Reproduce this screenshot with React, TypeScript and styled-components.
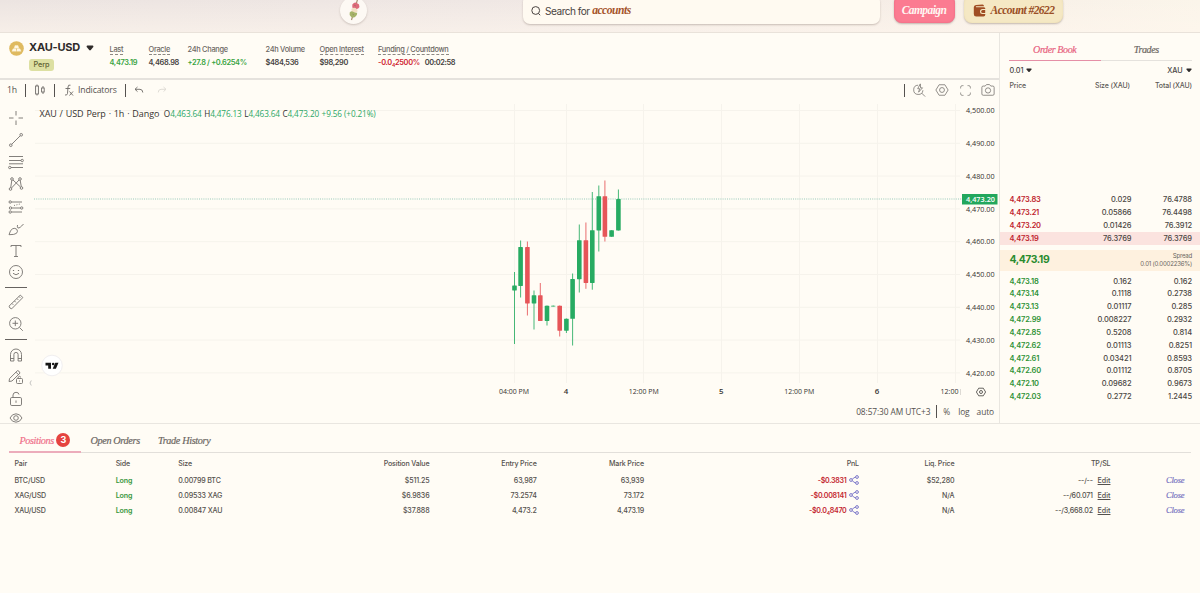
import React from 'react';
import styled, { createGlobalStyle } from 'styled-components';

const SANS = "Inter, 'Liberation Sans', sans-serif";
const SERIF = "'Liberation Serif', serif";
const CHART = "'Open Sans', 'Noto Sans', sans-serif";

const Global = createGlobalStyle`
  * { box-sizing: border-box; }
  body { margin: 0; background: #fffcf5; font-family: ${SANS}; color: #4b4744; }
`;

const Page = styled.div`
  width: 1200px;
  height: 593px;
  overflow: hidden;
  display: flex;
  flex-direction: column;
  background: #fffcf5;
`;

/* ---------- header ---------- */
const Header = styled.header`
  height: 33px;
  flex: none;
  display: flex;
  align-items: flex-start;
  background: linear-gradient(180deg, rgba(255, 250, 240, 0) 0%, rgba(255, 247, 238, 0.55) 100%),
    linear-gradient(90deg, #ece4e1 0%, #efe7e4 40%, #f5ece6 70%, #fbf5ea 100%);
  border-bottom: 1px solid #e9e2da;
`;

const LogoDisc = styled.div`
  width: 27px;
  height: 27px;
  margin: -3.5px 0 0 340px;
  border-radius: 50%;
  background: #fdf9f4;
  box-shadow: 0 1px 2px rgba(90, 70, 60, 0.25);
  display: flex;
  justify-content: center;
`;

const Search = styled.div`
  width: 357px;
  height: 29px;
  margin: -5px 0 0 155.5px;
  padding: 2px 0 0 8.5px;
  border-radius: 7px;
  background: #fffaf1;
  box-shadow: 0 1px 2px rgba(90, 70, 60, 0.3);
  display: flex;
  align-items: center;
  font-size: 10.1px;
  letter-spacing: -0.5px;
  color: #4a4441;
  svg { margin-right: 4px; }
`;

const Accent = styled.em`
  margin-left: 2.5px;
  font: italic 700 11.6px ${SERIF};
  letter-spacing: -0.5px;
  color: #a5532a;
`;

const HeaderButton = styled.div<{ $w: number; $gap: number; $bg: string; $fg: string; $edge: string }>`
  width: ${p => p.$w}px;
  height: 28px;
  margin: -5px 0 0 ${p => p.$gap}px;
  padding-top: 2px;
  border-radius: 8px;
  background: ${p => p.$bg};
  color: ${p => p.$fg};
  box-shadow: 0 1px 2px rgba(90, 70, 60, 0.35), inset 0 0 2px ${p => p.$edge};
  display: flex;
  align-items: center;
  justify-content: center;
  gap: 5px;
  font: italic 700 11.5px ${SERIF};
  letter-spacing: -0.57px;
  white-space: nowrap;
`;

/* ---------- trading area ---------- */
const Trading = styled.div`
  height: 391px;
  flex: none;
  display: flex;
  border-bottom: 1px solid #e9e6e0;
`;

const Left = styled.div`
  width: 999px;
  display: flex;
  flex-direction: column;
`;

const Market = styled.section`
  height: 47px;
  flex: none;
  display: flex;
  border-bottom: 2px solid #e5e2dd;
`;

const PairCol = styled.div`
  width: 100px;
  padding: 8px 0 0 9px;
  display: flex;
  align-items: flex-start;
`;

const PairInfo = styled.div`
  margin-left: 5px;
`;

const PairName = styled.div`
  height: 13px;
  display: flex;
  align-items: center;
  gap: 6px;
  font-size: 11px;
  font-weight: 700;
  line-height: 13px;
  letter-spacing: -0.2px;
  white-space: nowrap;
  color: #2f2b2a;
`;

const Tag = styled.div`
  width: 25px;
  height: 12px;
  margin-top: 4.5px;
  border-radius: 3px;
  background: #dde0a2;
  color: #5d6130;
  font-size: 7.3px;
  font-weight: 500;
  line-height: 12px;
  letter-spacing: -0.1px;
  text-align: center;
`;

const Stat = styled.div<{ $w: number }>`
  width: ${p => p.$w}px;
  padding: 12px 0 0 9.5px;
  white-space: nowrap;
  font-size: 7.4px;
  line-height: 9px;
`;

const StatLabel = styled.span<{ $dashed?: boolean }>`
  display: inline-block;
  height: 9.5px;
  font-weight: 500;
  color: #6c6763;
  letter-spacing: -0.28px;
  border-bottom: ${p => (p.$dashed ? '1px dashed #8d8883' : '1px solid transparent')};
`;

const StatValue = styled.div<{ $c?: string }>`
  margin-top: 3px;
  font-weight: 600;
  letter-spacing: -0.31px;
  color: ${p => p.$c ?? '#45413e'};
  sub { font-size: 5px; line-height: 0; vertical-align: -1.5px; }
  span { margin-left: 5px; color: #45413e; font-weight: 600; letter-spacing: -0.38px; }
`;

/* ---------- chart ---------- */
const Toolbar = styled.div`
  height: 20px;
  flex: none;
  display: flex;
  align-items: center;
  padding-left: 7px;
  font: 8.7px ${CHART};
  letter-spacing: -0.15px;
  color: #55524f;
`;

const Rule = styled.i<{ $l: number; $r: number }>`
  width: 1px;
  height: 13px;
  margin: 0 ${p => p.$r}px 0 ${p => p.$l}px;
  background: #55524f;
`;

const Spacer = styled.div<{ $w?: number; $h?: number }>`
  flex: ${p => (p.$w || p.$h ? 'none' : 1)};
  width: ${p => p.$w ?? 0}px;
  height: ${p => p.$h ?? 0}px;
`;

const ChartRow = styled.div`
  height: 323px;
  display: flex;
`;

const Tools = styled.div`
  width: 34px;
  padding: 10px 0 0 5px;
  overflow: hidden;
  display: flex;
  flex-direction: column;
`;

const ToolSlot = styled.div<{ $h?: number }>`
  width: 22px;
  height: ${p => p.$h ?? 22}px;
  flex: none;
  display: flex;
  justify-content: center;
  align-items: flex-start;
`;

const ToolRule = styled.div`
  width: 22px;
  height: 1px;
  flex: none;
  background: #66625f;
`;

const ChartCol = styled.div`
  width: 965px;
  position: relative;
`;

const Legend = styled.div`
  position: absolute;
  left: 5.5px;
  top: 8px;
  display: flex;
  align-items: baseline;
  white-space: nowrap;
  font: 8.2px/12px ${CHART};
  letter-spacing: -0.1px;
  color: #35322f;
`;

const LegendTitle = styled.span`
  margin-right: 4.5px;
  font-size: 9px;
  word-spacing: 0.6px;
  letter-spacing: -0.07px;
`;

const Ohlc = styled.span`
  margin-right: 2.5px;
  b { font-weight: 500; color: #2ba765; }
`;

const ChartFooter = styled.div`
  height: 21px;
  padding-right: 5px;
  display: flex;
  align-items: center;
  justify-content: flex-end;
  font: 8.4px ${CHART};
  letter-spacing: -0.1px;
  color: #55524f;
`;

/* ---------- order book ---------- */
const Book = styled.aside`
  width: 201px;
  border-left: 1px solid #e9e6e0;
  display: flex;
  flex-direction: column;
`;

const BookTabs = styled.div`
  height: 28px;
  flex: none;
  margin: 0 8px 0 9px;
  display: flex;
  border-bottom: 1px solid #e5e2dd;
`;

const BookTab = styled.div<{ $on?: boolean }>`
  flex: 1;
  height: 28px;
  padding-top: 5.5px;
  text-align: center;
  font: italic 400 10px/22px ${SERIF};
  letter-spacing: -0.38px;
  color: ${p => (p.$on ? '#e8627f' : '#6c6763')};
  -webkit-text-stroke: 0.2px currentColor;
  border-bottom: ${p => (p.$on ? '1.5px solid #e58fa6' : '0')};
`;

const BookSelects = styled.div`
  height: 18px;
  flex: none;
  padding: 0 8.5px 0 9.5px;
  display: flex;
  align-items: center;
  justify-content: space-between;
  font-size: 7.3px;
  font-weight: 500;
  letter-spacing: -0.12px;
  svg { margin-left: 3px; vertical-align: 0; }
`;

const BookLine = styled.div<{ $bg?: string }>`
  height: 12.83px;
  flex: none;
  padding: 0 8px 0 9.5px;
  display: grid;
  grid-template-columns: 60px 62px 60.5px;
  align-items: center;
  background: ${p => p.$bg ?? 'transparent'};
  font-size: 7.5px;
  font-weight: 500;
  letter-spacing: -0.08px;
  span { text-align: right; }
`;

const BookHead = styled(BookLine)`
  grid-template-columns: 60px 60.5px 62px;
  font-size: 7px;
  letter-spacing: -0.12px;
  color: #5d5955;
`;

const Price = styled.b<{ $c: string }>`
  font-size: 7.5px;
  font-weight: 600;
  letter-spacing: -0.2px;
  color: ${p => p.$c};
`;

const SpreadRow = styled.div`
  height: 21.5px;
  flex: none;
  margin: 5px 0 3.5px;
  padding: 0 8px 0 9.5px;
  display: flex;
  align-items: center;
  justify-content: space-between;
  background: #fef1df;
  font-size: 6.1px;
  line-height: 8.5px;
  letter-spacing: -0.23px;
  text-align: right;
  color: #6c6763;
  b { font-size: 10.4px; color: #2a8c2f; letter-spacing: -0.45px; }
`;

/* ---------- positions ---------- */
const Bottom = styled.section`
  flex: 1;
  padding: 0 9px;
`;

const Tabs = styled.div`
  height: 29px;
  display: flex;
  border-bottom: 1px solid #e2dfda;
`;

const Tab = styled.div<{ $w: number; $on?: boolean }>`
  width: ${p => p.$w}px;
  height: 29px;
  padding-left: ${p => (p.$on ? 10.5 : 9.5)}px;
  padding-top: ${p => (p.$on ? 5 : 3)}px;
  display: flex;
  align-items: center;
  white-space: nowrap;
  font: italic 400 10.2px ${SERIF};
  letter-spacing: ${p => (p.$on ? -0.4 : -0.35)}px;
  -webkit-text-stroke: 0.2px currentColor;
  color: ${p => (p.$on ? '#f0708a' : '#6c6763')};
  border-bottom: ${p => (p.$on ? '2px solid #ecacbb' : '0')};
`;

const Badge = styled.span`
  width: 14px;
  height: 14px;
  margin-left: 2.5px;
  border-radius: 50%;
  background: #e5433f;
  color: #fff;
  font: 700 9px/14px ${SANS};
  letter-spacing: 0;
  -webkit-text-stroke: 0;
  text-align: center;
`;

const TableRow = styled.div<{ $h: number }>`
  height: ${p => p.$h}px;
  padding-left: 5.5px;
  display: grid;
  grid-template-columns: 101.2px 62.6px 251.2px 107.2px 107.3px 215px 95.5px 156px 74px;
  align-items: center;
  font-size: 7.1px;
  font-weight: 500;
  letter-spacing: -0.15px;
  color: #55514d;
`;

const SizeCell = styled.div`
  display: flex;
  justify-content: space-between;
`;

const Cell = styled.div<{ $c?: string; $bold?: boolean }>`
  text-align: right;
  white-space: nowrap;
  color: ${p => p.$c ?? 'inherit'};
  font-weight: ${p => (p.$bold ? 600 : 500)};
  letter-spacing: ${p => (p.$bold ? -0.3 : -0.17)}px;
  sub { font-size: 5px; line-height: 0; vertical-align: -1.5px; }
  u { margin-left: 3px; letter-spacing: 0; }
  svg { vertical-align: -2.5px; margin: -2px 0 0 2.5px; }
`;

const LeftCell = styled.div<{ $c?: string }>`
  white-space: nowrap;
  color: ${p => p.$c ?? 'inherit'};
  font-weight: ${p => (p.$c ? 600 : 500)};
`;

const CloseLink = styled(Cell)`
  padding-bottom: 1px;
  font: italic 8.6px/10px ${SERIF};
  letter-spacing: -0.2px;
  color: #7470c0;
  -webkit-text-stroke: 0.15px currentColor;
`;

/* ---------- drawings ---------- */
const Caret = ({ w = 8 }: { w?: number }) => (
  <svg width={w} height={w * 0.75} viewBox="0 0 8 6">
    <path d="M1.3.6h5.4q1.1.3.6 1.4L4.8 5Q4 5.9 3.2 5L.7 2Q.2.9 1.3.6z" fill="#2f2b2a" />
  </svg>
);

const Dango = () => (
  <svg width="16" height="27" viewBox="0 0 16 27">
    <path d="M11.500 2.500 5.500 23" stroke="#a99072" strokeWidth="1.200" />
    <path d="M6.300 7.500q2-2.300 3.700-1.800t3 1.800q1 2.300-.5 3.800l-3.300 1.500q-2.200-.5-2.900-2.500z" fill="#dd6a79" />
    <path d="M5.300 12q2-2 4.300-1t2 3.500l-4 2q-2.300-1-2.300-4.500z" fill="#f3dfc4" />
    <path d="M3.700 15.500q1.800-2 3.500-.7t4 1q.3 3-2.200 4.200t-4-.3q-2-2-1.300-4.200z" fill="#a5b368" />
    <path d="M8 8l2 1M6.500 17l1.500 1" stroke="#8a6a58" strokeWidth=".5" />
  </svg>
);

const SearchIcon = () => (
  <svg width="10" height="10" viewBox="0 0 10 10" fill="none" stroke="#4a4441" strokeWidth="1">
    <circle cx="4.700" cy="4.500" r="3.900" />
    <path d="M7.300 7.400 9.200 9.200" />
  </svg>
);

const Wallet = () => (
  <svg width="13" height="13" viewBox="0 0 13 13">
    <path d="M3 1 9.500.5q1.500 0 1.500 1.700H3.200q-.8.5 0 1H11q1.300.2 1.300 1.600V5H9.500a2.500 2.500 0 0 0 0 5h2.800v.5q0 2-1.800 2H3.200Q.8 12.500.8 10V3.200Q.8 1.200 3 1z" fill="#a04e24" />
    <path d="M9.700 6h2.500v3H9.700a1.500 1.500 0 0 1 0-3z" fill="#a04e24" />
  </svg>
);

const Gold = () => (
  <svg width="15" height="15" viewBox="0 0 15 15">
    <circle cx="7.500" cy="7.500" r="7.300" fill="#dfba60" />
    <path d="M6 4.500h3l.9 2.800H5.100zM4 7.800h2.900l.3 2.500H2.900zM8.100 7.800H11l1.100 2.500H7.800z" fill="#fff8e4" stroke="#fff8e4" strokeWidth=".3" strokeLinejoin="round" />
  </svg>
);

const Share = () => (
  <svg width="10" height="10" viewBox="0 0 10 10" fill="none" stroke="#6f6bc4" strokeWidth=".9">
    <circle cx="2" cy="5" r="1.400" />
    <circle cx="8" cy="2" r="1.400" />
    <circle cx="8" cy="8" r="1.400" />
    <path d="M3.300 4.400Q4.300 2.500 6.600 2.200M3.300 5.600q1 1.800 3.300 2.200" />
  </svg>
);

const Icon = ({ children, size = 16 }: { children: React.ReactNode; size?: number }) => (
  <svg width={size} height={size} viewBox="0 0 16 16" fill="none" stroke="#75726e" strokeWidth=".9">
    {children}
  </svg>
);

const tools: { h?: number; d?: React.ReactNode; rule?: boolean }[] = [
  { d: <path d="M8 1v4.500M8 10.500V15M1 8h4.500M10.500 8H15" /> },
  { d: <><circle cx="2.800" cy="13.200" r="1.300" /><circle cx="13.200" cy="2.800" r="1.300" /><path d="m3.800 12.200 8.400-8.400" /></> },
  { d: <><path d="M1 2.500h14M1 6.500h12M1 9.800h14M3 13.500h12" /><circle cx="14.200" cy="6.500" r="1.200" /><circle cx="1.800" cy="13.500" r="1.200" /></> },
  { h: 22.5, d: <><circle cx="4" cy="3" r="1.300" /><circle cx="12" cy="3" r="1.300" /><circle cx="2.500" cy="13" r="1.300" /><circle cx="13.500" cy="12" r="1.300" /><path d="M3.800 4.300 2.700 11.700M12.200 4.300l1.100 6.400M5 4l7.500 7M11 4l-7.500 8" /></> },
  { d: <><path d="M3.500 3H14M4 9h8.500M3.500 13H14" /><circle cx="2.200" cy="3" r="1.200" /><circle cx="2.500" cy="9" r="1.200" /><circle cx="13.700" cy="9" r="1.200" /><circle cx="2.200" cy="13" r="1.200" /><path d="M6 6.500 12 5" strokeDasharray="1 1.500" /></> },
  { d: <path d="M1 13.700q1.200-4.500 3.500-6 2.500-1 4.300.6 1.500 2-.3 4-1.800 1.500-7.500 1.400zM10 7q1.700.5 5.500-4M9.500 4q-.5 2 .5 3" /> },
  { h: 21.5, d: <path d="M3 4V2.500h10V4M8 2.500v11M6 13.500h4" /> },
  { h: 23, d: <><circle cx="8" cy="8" r="6.500" /><path d="M5 9.300q3 3 6 0" /><path d="M5.500 6v1M10.500 6v1" strokeWidth="1.200" /></> },
  { rule: true },
  { h: 6 },
  { d: <path d="m1 12.200 11.200-11q1.500.6 2.500 2.500L3.700 14.800Q1.500 14.500 1 12.200zM4 9.500l1.300 1.300M6.500 7l1.300 1.300M9 4.600l1.300 1.300M11 2.500l1.300 1.300" /> },
  { h: 23, d: <><circle cx="7.300" cy="7.300" r="5.700" /><path d="m11.500 11.500 3.300 3.300M7.300 4.500v5.600M4.500 7.300h5.600" /></> },
  { rule: true },
  { h: 6.5 },
  { h: 22.5, d: <path d="M2.500 14V7.500a5.500 5.500 0 0 1 11 0V14h-3.400V7.500a2.100 2.100 0 0 0-4.200 0V14zM2.500 11.500h3.400M10.100 11.500h3.400" /> },
  { h: 21.5, d: <><path d="m1 12.500.6-3L9.500 1.600q2 .3 2.500 2.500L4 12zM8 3.200l2.500 2.500" /><rect x="8.500" y="9.500" width="6" height="5" rx="1" /><path d="M10 9.500V8.300q1.500-2 3 0M11.500 11.500v1" /></> },
  { h: 19.5, d: <><rect x="2.500" y="6.500" width="11" height="8" rx="1.300" /><path d="M5 6.500V4q.3-2.700 3-2.700T11 3.500M8 9.500v2.300" /></> },
  { d: <><path d="M2 8Q4 3.800 8 3.800T14 8Q12 12.200 8 12.200T2 8z" /><circle cx="8" cy="8" r="2.300" /></> },
];

const G = '#27ab62';
const R = '#e65558';
// x, wick top, wick bottom, body top, body bottom, colour
const candles: [number, number, number, number, number, string][] = [
  [514.5, 272, 344, 285.5, 290.5, G],
  [520.6, 240.5, 297.5, 247, 286, G],
  [527.4, 241.5, 315.5, 247, 303.5, R],
  [534, 290.5, 329.5, 295.3, 303.5, G],
  [540.3, 283, 321, 295.3, 321, R],
  [547, 305.5, 325.5, 305.7, 321, G],
  [553.2, 305.5, 306.5, 305.7, 306.5, G],
  [559.7, 305.5, 336.5, 305.7, 330.7, R],
  [566.4, 318.5, 333, 318.7, 330.7, G],
  [572.6, 273.5, 345.5, 279, 318.8, G],
  [579.3, 224.5, 292.5, 240.2, 279.2, G],
  [585.9, 222.5, 288.8, 240.2, 283, R],
  [592.3, 192, 289.7, 230.2, 283, G],
  [598.8, 185.5, 251.5, 196.2, 230.5, G],
  [604.9, 180.5, 241.5, 196.2, 236.8, R],
  [611.6, 230.2, 236.8, 230.2, 236.8, G],
  [618.4, 189.5, 230.5, 199, 230.5, G],
];

const ticks = ['4,500.00', '4,490.00', '4,480.00', '4,470.00', '4,460.00', '4,450.00', '4,440.00', '4,430.00', '4,420.00'];
const times: [number, string, number][] = [
  [514, '04:00 PM', 30], [566, '4', 4.5], [643.7, '12:00 PM', 30], [721.3, '5', 4.5], [799.2, '12:00 PM', 30], [877, '6', 4.5],
];

const ChartSvg = styled.svg`
  display: block;
  font-family: ${CHART};
  font-size: 7.9px;
  fill: #35322f;
`;

const PriceChart = () => (
  <ChartSvg width="965" height="301" viewBox="34 100 965 301">
    {ticks.map((t, i) => <path key={t} d={`M35 ${110.5 + i * 32.8}H960`} stroke="#f6f3ec" />)}
    {[514.5, 566.5, 643.5, 721.5, 799.5, 877.5, 955.5].map(x => <path key={x} d={`M${x} 104V383`} stroke="#f6f3ec" />)}
    <path d="M34 199H962" stroke="#8cc4b4" strokeWidth=".9" strokeDasharray="1 1.200" />
    {candles.map(([x, wt, wb, bt, bb, c]) => (
      <g key={x} fill={c}>
        <rect x={x - 0.5} y={wt} width="1" height={wb - wt} opacity=".85" />
        <rect x={x - 2.3} y={bt} width="4.600" height={bb - bt} rx=".4" />
      </g>
    ))}
    {ticks.map((t, i) => (
      <text key={t} x="966" y={113.1 + i * 32.8} textLength="28.600" lengthAdjust="spacingAndGlyphs">{t}</text>
    ))}
    <rect x="962" y="194" width="35.500" height="10.500" fill="#22a75d" />
    <text x="966" y="202" fill="#fff" fontWeight="600" textLength="29" lengthAdjust="spacingAndGlyphs">4,473.20</text>
    {times.map(([x, t, w]) => (
      <text key={x} x={x} y="394.200" textAnchor="middle" textLength={w} lengthAdjust="spacingAndGlyphs" fontWeight={t.length < 2 ? 600 : 400}>{t}</text>
    ))}
    <text x="940.500" y="394.200" textLength="18" lengthAdjust="spacingAndGlyphs">12:00</text>
    <path d="M960.500 389v6" stroke="#cfccc6" strokeWidth=".7" />
    <g fill="none" stroke="#55524f" strokeWidth=".9">
      <path d="m978.700 388.200h4.600l2.300 3.800-2.300 3.800h-4.600l-2.300-3.800z" />
      <circle cx="981" cy="392" r="1.500" />
    </g>
    <circle cx="52" cy="365.500" r="10.300" fill="#fff" stroke="#f1eff0" />
    <path d="M45.500 362.700h5.500v6h-2.800v-3.200h-2.700zM55.300 362.700h3.200l-2.600 6h-3.200z" fill="#161616" />
    <circle cx="53.200" cy="364" r="1.300" fill="#161616" />
  </ChartSvg>
);

const Collapse = styled.svg`
  width: 3px;
  height: 6px;
  flex: none;
  margin: 280px -5px 0 -5px;
  z-index: 1;
`;

const asks = [
  ['4,473.83', '0.029', '76.4788'],
  ['4,473.21', '0.05866', '76.4498'],
  ['4,473.20', '0.01426', '76.3912'],
  ['4,473.19', '76.3769', '76.3769'],
];
const bids = [
  ['4,473.18', '0.162', '0.162'],
  ['4,473.14', '0.1118', '0.2738'],
  ['4,473.13', '0.01117', '0.285'],
  ['4,472.99', '0.008227', '0.2932'],
  ['4,472.85', '0.5208', '0.814'],
  ['4,472.62', '0.01113', '0.8251'],
  ['4,472.61', '0.03421', '0.8593'],
  ['4,472.60', '0.01112', '0.8705'],
  ['4,472.10', '0.09682', '0.9673'],
  ['4,472.03', '0.2772', '1.2445'],
];

const positions = [
  { pair: 'BTC/USD', size: '0.00799 BTC', value: '$511.25', entry: '63,987', mark: '63,939', pnl: <>-$0.3831</>, liq: '$52,280', tp: '--/--' },
  { pair: 'XAG/USD', size: '0.09533 XAG', value: '$6.9836', entry: '73.2574', mark: '73.172', pnl: <>-$0.008141</>, liq: 'N/A', tp: '--/60.071' },
  { pair: 'XAU/USD', size: '0.00847 XAU', value: '$37.888', entry: '4,473.2', mark: '4,473.19', pnl: <>-$0.0<sub>4</sub>8470</>, liq: 'N/A', tp: '--/3,668.02' },
];

export default function App() {
  return (
    <Page>
      <Global />
      <Header>
        <LogoDisc><Dango /></LogoDisc>
        <Search><SearchIcon />Search for<Accent>accounts</Accent></Search>
        <HeaderButton $w={61} $gap={14} $bg="#fb7b91" $fg="#fff6f2" $edge="#e9607c">Campaign</HeaderButton>
        <HeaderButton $w={99} $gap={9.5} $bg="#f5e8c4" $fg="#9a4f26" $edge="#ecdcae"><Wallet />Account #2622</HeaderButton>
      </Header>

      <Trading>
        <Left>
          <Market>
            <PairCol>
              <Gold />
              <PairInfo>
                <PairName>XAU-USD<Caret /></PairName>
                <Tag>Perp</Tag>
              </PairInfo>
            </PairCol>
            <Stat $w={39}><StatLabel $dashed>Last</StatLabel><StatValue $c="#37a33f">4,473.19</StatValue></Stat>
            <Stat $w={39}><StatLabel $dashed>Oracle</StatLabel><StatValue>4,468.98</StatValue></Stat>
            <Stat $w={78}><StatLabel>24h Change</StatLabel><StatValue $c="#37a33f">+27.8 / +0.6254%</StatValue></Stat>
            <Stat $w={54}><StatLabel>24h Volume</StatLabel><StatValue>$484,536</StatValue></Stat>
            <Stat $w={58.5}><StatLabel $dashed>Open Interest</StatLabel><StatValue>$98,290</StatValue></Stat>
            <Stat $w={100}><StatLabel $dashed>Funding / Countdown</StatLabel><StatValue $c="#cf2430">-0.0<sub>4</sub>2500%<span>00:02:58</span></StatValue></Stat>
          </Market>

          <Toolbar>
            1h
            <Rule $l={8} $r={9} />
            <svg width="10" height="12" viewBox="0 0 10 12" fill="none" stroke="#6c6965" strokeWidth=".9"><rect x=".6" y="2" width="2.800" height="8" /><path d="M2 .5V2M2 10v1.500M8 2v2M8 8v2" /><rect x="6.600" y="4" width="2.600" height="4" /></svg>
            <Rule $l={8.5} $r={9.5} />
            <svg width="10" height="12" viewBox="0 0 10 12" fill="none" stroke="#6c6965" strokeWidth=".9"><path d="M6.500 1.200Q4.200.3 4 3L3.500 9.500q-.3 2-2.500 1.500M1.500 4.500h4.700M5.500 7.500l3.500 4M9 7.500l-3.500 4" /></svg>
            <Spacer $w={4} />
            Indicators
            <Rule $l={8} $r={8.5} />
            <svg width="10" height="8" viewBox="0 0 10 8" fill="none" stroke="#6c6965" strokeWidth=".9"><path d="M3.500 1 1 3.300l2.500 2.300M1 3.300h5q2.800.2 2.800 3.200" /></svg>
            <Spacer $w={13} />
            <svg width="10" height="8" viewBox="0 0 10 8" fill="none" stroke="#dcd9d3" strokeWidth=".9"><path d="M6.500 1 9 3.300 6.500 5.600M9 3.300H4Q1.200 3.500 1.200 6.500" /></svg>
            <Spacer />
            <Rule $l={0} $r={7.5} />
            <Icon size={14}><path d="M7 2.500a5.300 5.300 0 1 0 5.500 5.800M11 11.500l4 4M9.500 1 6.500 6.500h2.300l-1.300 4 4.500-5H9.800z" /></Icon>
            <Spacer $w={9} />
            <Icon size={14}><path d="M4.700 2h6.600L15 8l-3.700 6H4.700L1 8z" /><circle cx="8" cy="8" r="2.800" /></Icon>
            <Spacer $w={9.5} />
            <Icon size={13}><path d="M2 5.500V4q0-2 2-2h1.500M10.500 2H12q2 0 2 2v1.500M14 10.500V12q0 2-2 2h-1.500M5.500 14H4q-2 0-2-2v-1.500" /></Icon>
            <Spacer $w={9.5} />
            <Icon size={14}><path d="M2.500 3.500h2.300l1.500-1.700h3.400l1.500 1.700h2.300q1.500 0 1.500 1.500v7.500q0 1.500-1.500 1.500h-11Q1 14 1 12.500V5q0-1.500 1.500-1.500z" /><circle cx="8" cy="8.500" r="3" /></Icon>
            <Spacer $w={4} />
          </Toolbar>

          <ChartRow>
            <Tools>
              {tools.map((t, i) => t.rule ? <ToolRule key={i} /> : <ToolSlot key={i} $h={t.h}>{t.d && <Icon>{t.d}</Icon>}</ToolSlot>)}
            </Tools>
            <Collapse viewBox="0 0 3 6"><path d="M2.300.5 1 3l1.300 2.500" stroke="#aaa" strokeWidth=".7" fill="none" /></Collapse>
            <Spacer $w={7} />
            <ChartCol>
              <PriceChart />
              <Legend>
                <LegendTitle>XAU / USD Perp · 1h · Dango</LegendTitle>
                <Ohlc>O<b>4,463.64</b></Ohlc>
                <Ohlc>H<b>4,476.13</b></Ohlc>
                <Ohlc>L<b>4,463.64</b></Ohlc>
                <Ohlc>C<b>4,473.20</b></Ohlc>
                <Ohlc><b>+9.56 (+0.21%)</b></Ohlc>
              </Legend>
              <ChartFooter>
                08:57:30 AM UTC+3
                <Rule $l={6} $r={6} />
                %<Spacer $w={8} />log<Spacer $w={7} />auto
              </ChartFooter>
            </ChartCol>
          </ChartRow>
        </Left>

        <Book>
          <BookTabs>
            <BookTab $on>Order Book</BookTab>
            <BookTab>Trades</BookTab>
          </BookTabs>
          <BookSelects>
            <div>0.01<Caret w={6} /></div>
            <div>XAU<Caret w={6} /></div>
          </BookSelects>
          <BookHead><div>Price</div><span>Size (XAU)</span><span>Total (XAU)</span></BookHead>
          <Spacer $h={101.5} />
          {asks.map((r, i) => (
            <BookLine key={r[0]} $bg={i === 3 ? '#fbe3df' : undefined}>
              <Price $c="#c01f2e">{r[0]}</Price><span>{r[1]}</span><span>{r[2]}</span>
            </BookLine>
          ))}
          <SpreadRow><b>4,473.19</b><div>Spread<br />0.01 (0.0002236%)</div></SpreadRow>
          {bids.map(r => (
            <BookLine key={r[0]}>
              <Price $c="#2f9236">{r[0]}</Price><span>{r[1]}</span><span>{r[2]}</span>
            </BookLine>
          ))}
        </Book>
      </Trading>

      <Bottom>
        <Tabs>
          <Tab $w={72} $on>Positions<Badge>3</Badge></Tab>
          <Tab $w={67.5}>Open Orders</Tab>
          <Tab $w={90}>Trade History</Tab>
        </Tabs>
        <TableRow $h={20}>
          <LeftCell>Pair</LeftCell><LeftCell>Side</LeftCell>
          <SizeCell><span>Size</span><span>Position Value</span></SizeCell>
          <Cell>Entry Price</Cell><Cell>Mark Price</Cell><Cell>PnL</Cell><Cell>Liq. Price</Cell><Cell>TP/SL</Cell>
        </TableRow>
        {positions.map(p => (
          <TableRow key={p.pair} $h={15.1}>
            <LeftCell>{p.pair}</LeftCell><LeftCell $c="#37963c">Long</LeftCell>
            <SizeCell><span>{p.size}</span><span>{p.value}</span></SizeCell>
            <Cell>{p.entry}</Cell><Cell>{p.mark}</Cell>
            <Cell $c="#c3262f" $bold>{p.pnl}<Share /></Cell>
            <Cell>{p.liq}</Cell><Cell>{p.tp} <u>Edit</u></Cell><CloseLink>Close</CloseLink>
          </TableRow>
        ))}
      </Bottom>
    </Page>
  );
}
